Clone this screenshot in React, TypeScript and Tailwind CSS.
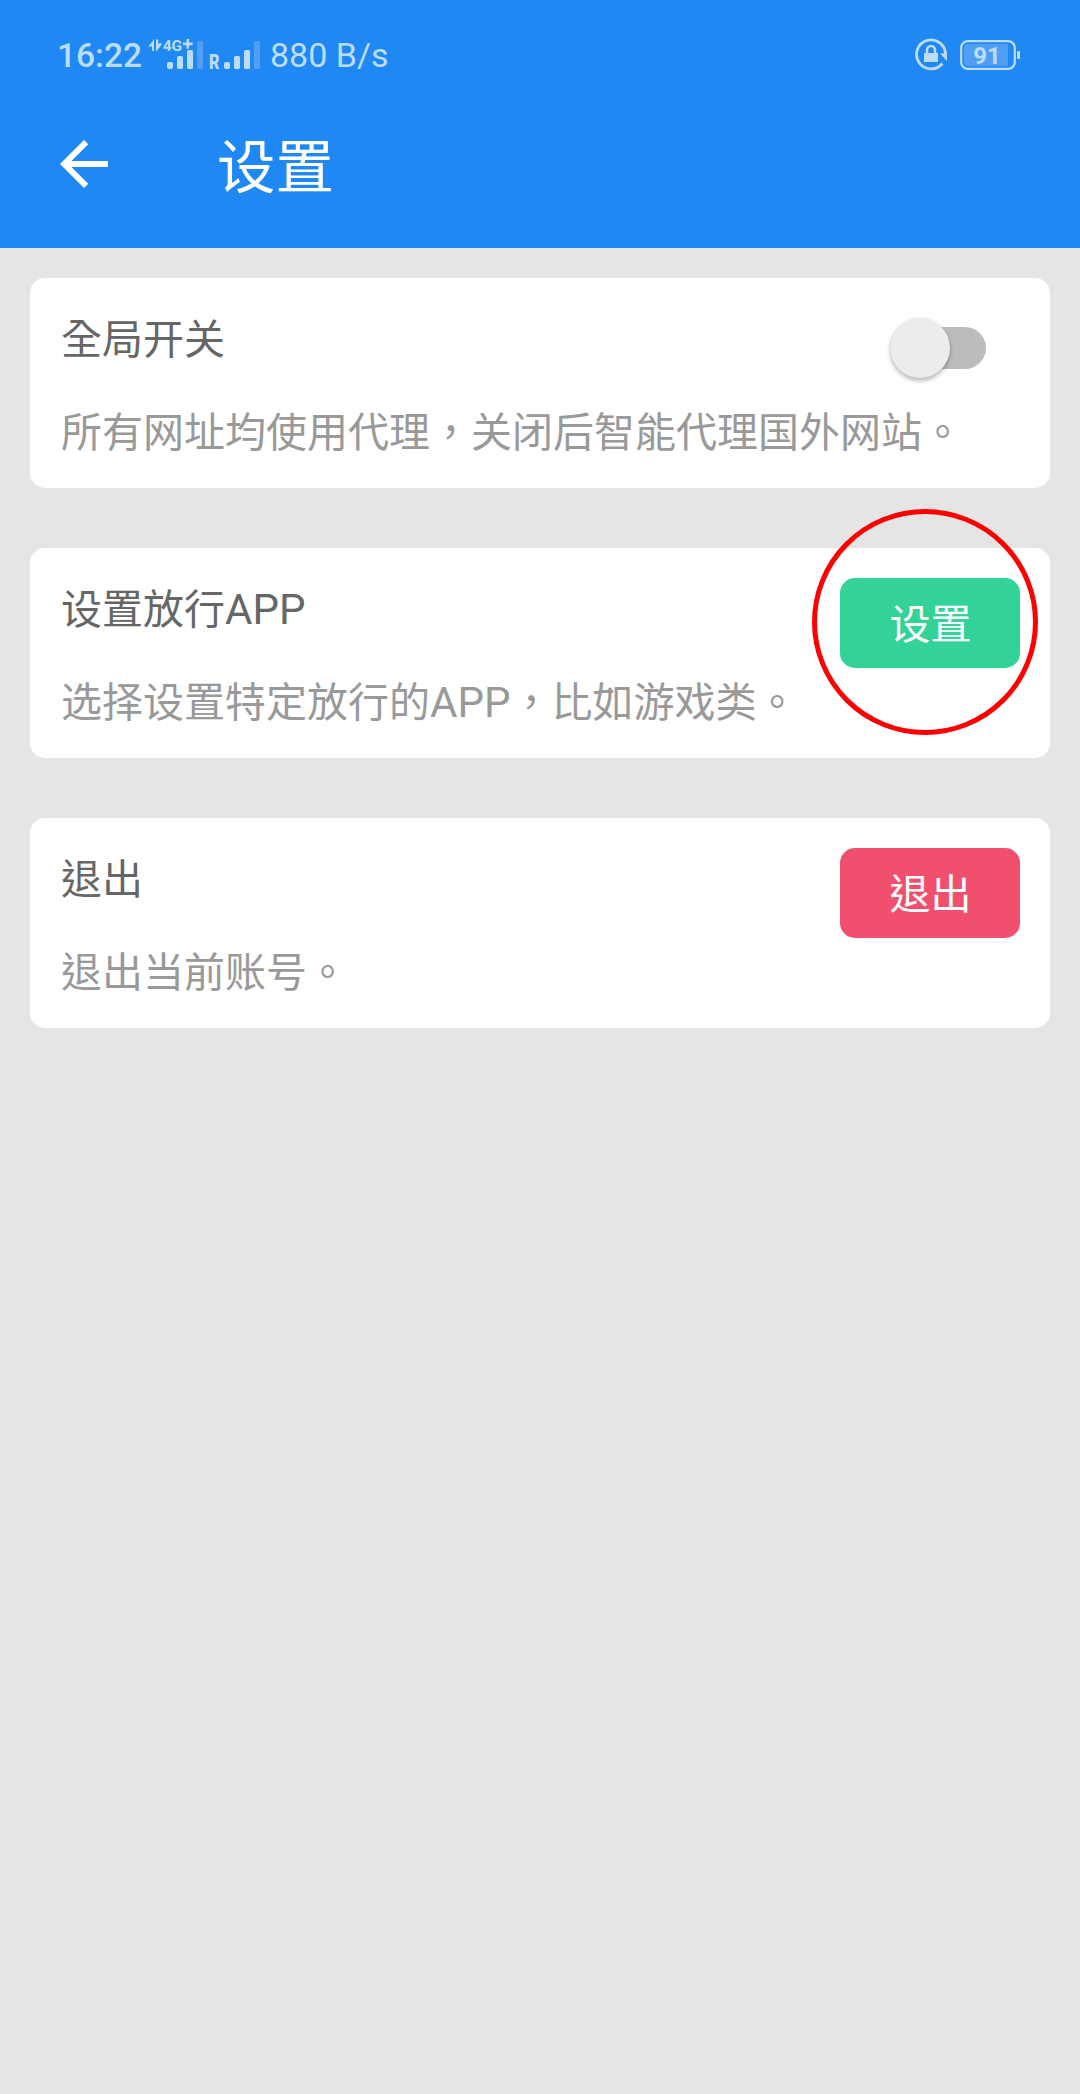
import type { ReactNode } from "react";

function SignalIcons() {
  return (
    <svg width="114" height="40" viewBox="148 35 114 40" fill="#bcdcfb" className="absolute top-[35px] left-[148px]">
      <path d="M148 46.500l4-4.500 2-3v12h-2v-4.500zM156 39.500h2.300v4h4l-3.300 4.500-3 3.500z" />
      <text x="162.700" y="51.200" fontSize="15.500" fontWeight="700" fontFamily="Roboto, sans-serif">4G</text>
      <path d="M186.500 39h2.600v3.600h3.600v2.600h-3.600v3.600h-2.600v-3.600h-3.600v-2.600h3.600z" />
      <rect x="167" y="62" width="6" height="7" rx="2" />
      <rect x="177" y="56" width="6" height="13" rx="1.500" />
      <rect x="187" y="50" width="6" height="19" rx="1.500" />
      <rect x="197" y="41" width="6" height="28" rx="1.500" fill="#519ff5" />
      <text x="209" y="69" fontSize="20" fontWeight="900" fontFamily="Roboto, sans-serif" textLength="10.500" lengthAdjust="spacingAndGlyphs">R</text>
      <rect x="224" y="62" width="6" height="7" rx="2" />
      <rect x="234" y="56" width="6" height="13" rx="1.500" />
      <rect x="244" y="50" width="6" height="19" rx="1.500" />
      <rect x="254" y="41" width="6" height="28" rx="1.500" fill="#519ff5" />
    </svg>
  );
}

function RotationLock() {
  return (
    <svg width="34" height="34" viewBox="914 38 34 34" fill="none" stroke="#bcdcfb" className="mr-3">
      <path d="M942.300 63.500A14.500 14.500 0 1 1 945.500 55" strokeWidth="2.800" />
      <path d="M940 53.500h7v7.500z" fill="#bcdcfb" stroke="none" />
      <rect x="924" y="53" width="14" height="9" fill="#bcdcfb" stroke="none" />
      <path d="M927 54v-4a4 4 0 0 1 8 0v4" strokeWidth="2.600" />
    </svg>
  );
}

function Battery() {
  return (
    <svg width="60" height="30" viewBox="960 40 60 30">
      <rect x="961.200" y="41.200" width="53.600" height="27.600" rx="6.500" fill="none" stroke="#bcdcfb" strokeWidth="2.200" />
      <path d="M1008 44v22h-40a4 4 0 0 1-4-4v-14a4 4 0 0 1 4-4z" fill="#519ff5" />
      <rect x="1017" y="51" width="3" height="8" rx="1" fill="#bcdcfb" />
      <text x="987" y="64" textAnchor="middle" fontSize="24" fontWeight="700" fontFamily="Roboto, sans-serif" fill="#bcdcfb">91</text>
    </svg>
  );
}

type CardProps = { title: ReactNode; text: ReactNode; children: ReactNode };

function Card({ title, text, children }: CardProps) {
  return (
    <section className="relative flex h-[210px] items-start justify-between rounded-[15px] bg-white p-[30px]">
      <div className="flex flex-col gap-[33px] pt-[2px] pl-px text-[41px] leading-[60px] whitespace-nowrap">
        <h2 className="h-[60px] text-[#666666]">{title}</h2>
        <p className="h-[60px] text-[#999999]">{text}</p>
      </div>
      {children}
    </section>
  );
}

function Latin({ children }: { children: ReactNode }) {
  return <span className="text-[42px]">{children}</span>;
}

export default function App() {
  return (
    <div className="flex h-[2094px] w-[1080px] flex-col bg-[#e5e5e5] font-[Roboto,'Noto_Sans_CJK_TC',sans-serif]" lang="zh-Hant">
      <header className="h-[248px] bg-[#1f88f2]">
        <div className="relative flex h-[110px] items-center pr-[60px] pl-[57px] text-[#bcdcfb]">
          <span className="w-[213px] pt-[3px] text-[33.500px] font-medium">16:22</span>
          <SignalIcons />
          <span className="text-[34px]">880 B/s</span>
          <div className="ml-auto flex items-center">
            <RotationLock />
            <Battery />
          </div>
        </div>
        <div className="flex h-[108px] items-center pl-12 text-white">
          <svg width="72" height="72" viewBox="0 0 24 24" fill="currentColor">
            <path d="M20 11H7.830l5.590-5.590L12 4l-8 8 8 8 1.410-1.410L7.830 13H20z" />
          </svg>
          <h1 className="ml-[97px] pt-2 text-[58.500px] leading-[80px]">设置</h1>
        </div>
      </header>
      <main className="flex flex-col gap-[60px] p-[30px]">
        <Card title="全局开关" text="所有网址均使用代理，关闭后智能代理国外网站。">
          <button aria-label="全局开关" className="absolute top-[49px] right-16 h-[42px] w-[82px] rounded-full bg-[#bcbcbc]">
            <span className="absolute -top-[9px] -left-[14px] size-[60px] rounded-full bg-[#ececec] shadow-[0_3px_4px_rgba(0,0,0,0.25),0_0_2px_rgba(0,0,0,0.12)]" />
          </button>
        </Card>
        <Card
          title={<>设置放行<Latin>APP</Latin></>}
          text={<>选择设置特定放行的<Latin>APP</Latin>，比如游戏类。</>}
        >
          <button className="h-[90px] w-[180px] rounded-[15px] bg-[#33d398] pt-[6px] pl-px text-[41px] text-white">设置</button>
          <span className="absolute -top-[39px] right-3 size-[226px] rounded-full border-[5px] border-[#ff0000]" />
        </Card>
        <Card title="退出" text="退出当前账号。">
          <button className="h-[90px] w-[180px] rounded-[15px] bg-[#f0506e] pt-[6px] pl-px text-[41px] text-white">退出</button>
        </Card>
      </main>
    </div>
  );
}
